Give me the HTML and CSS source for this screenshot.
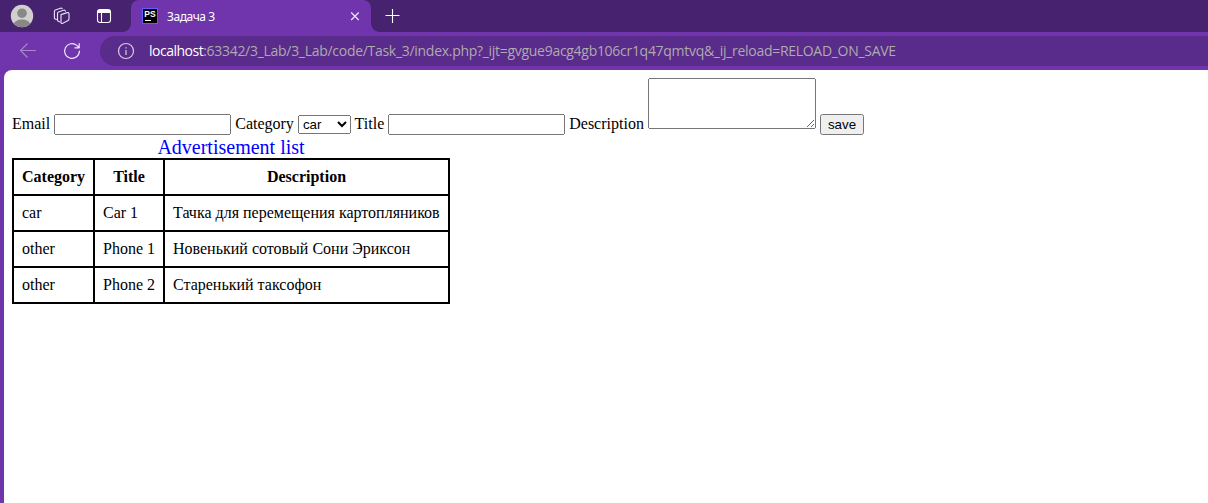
FILE: index.html
```html
<!DOCTYPE html>
<html lang="ru">
<head>
<meta charset="utf-8">
<title>Задача 3</title>
<link rel="stylesheet" href="styles.css">
</head>
<body>
<div class="tabstrip">
  <svg class="avatar" width="24" height="24" viewBox="0 0 24 24"><defs><clipPath id="face"><circle cx="12" cy="12" r="11.2"/></clipPath></defs><circle cx="12" cy="12" r="11.2" fill="#d2d0ce"/><g fill="#8a8886" clip-path="url(#face)"><circle cx="12" cy="9.2" r="4.8"/><ellipse cx="12" cy="20.5" rx="8.2" ry="5"/></g></svg>
  <svg class="workspaces" width="18" height="18" viewBox="0 0 18 18" fill="none" stroke="#e6dff0" stroke-width="1.15" stroke-linejoin="round" stroke-linecap="round"><path d="M8 7.6 14.2 5.6Q16 5.1 16 6.8V12q0 1-.9 1.4L9.8 16.2Q8 17 8 15.200Z"/><path d="M7 15 5.300 14.300Q4.500 14 4.500 13V6.400q0-1 1-1.400l5-1.700q1.500-.5 1.900.8"/><path d="M3.500 12.500 2.200 12Q1.400 11.700 1.400 10.700V4.400q0-1 1-1.400l5-1.700q1.300-.4 1.800.4"/></svg>
  <svg class="tabmenu" width="16" height="16" viewBox="0 0 16 16" fill="none" stroke="#fff" stroke-width="1.1"><rect x="1.500" y="1.500" width="13" height="13" rx="2.500"/><path d="M2 3.500h12" stroke-width="3"/><path d="M5.500 5v9"/></svg>
  <div class="tab">
    <svg width="16" height="16" viewBox="0 0 16 16"><rect x=".5" y=".5" width="15" height="15" fill="#000" stroke="#6b57ff"/><path d="M3 12.500h6" stroke="#fff"/><text class="mark" x="2.300" y="9">PS</text></svg>
    <span class="tab-title">Задача 3</span>
    <svg class="close" width="10" height="10" viewBox="0 0 10 10" stroke="#efe8f7" stroke-width="1.200"><path d="M1.200 1.500l7.500 7.500M8.700 1.500 1.200 9"/></svg>
  </div>
  <svg class="plus" width="16" height="16" viewBox="0 0 16 16" stroke="#fff" stroke-width="1.100"><path d="M1.500 7.500h14M8.500 1v14"/></svg>
</div>
<div class="toolbar">
  <svg class="back" width="18" height="18" viewBox="0 0 18 18" fill="none" stroke="#a888cd" stroke-width="1.100"><path d="M17 8.500H1.500M8.500 1.500l-7 7 7 7"/></svg>
  <svg class="reload" width="18" height="18" viewBox="0 0 18 18" fill="none" stroke="#f0e9f8" stroke-width="1.200" stroke-linecap="round" stroke-linejoin="round"><path d="M16.400 9A7.400 7.400 0 1 1 13.800 3.400L16 5.600M16.200 1.500v4.300h-4.300"/></svg>
  <div class="address">
    <svg class="info" width="18" height="18" viewBox="0 0 18 18" fill="none" stroke="#d8cce6" stroke-width="1.200"><circle cx="9" cy="9" r="7.500"/><path d="M9 8v5M9 5.200v1.400"/></svg>
    <div class="url"><span class="host">localhost</span><span class="path">:63342/3_Lab/3_Lab/code/Task_3/index.php?_ijt=gvgue9acg4gb106cr1q47qmtvq&amp;_ij_reload=RELOAD_ON_SAVE</span></div>
  </div>
</div>
<main class="page">
  <form>
    Email <input class="field" type="text">
    Category <select class="category"><option>car</option><option>other</option></select>
    Title <input class="field" type="text">
    Description <textarea class="description"></textarea>
    <button class="save" type="button">save</button>
  </form>
  <table class="ads">
    <caption>Advertisement list</caption>
    <tr><th class="col-category">Category</th><th class="col-title">Title</th><th class="col-description">Description</th></tr>
    <tr><td>car</td><td>Car 1</td><td>Тачка для перемещения картопляников</td></tr>
    <tr><td>other</td><td>Phone 1</td><td>Новенький сотовый Сони Эриксон</td></tr>
    <tr><td>other</td><td>Phone 2</td><td>Старенький таксофон</td></tr>
  </table>
</main>
</body>
</html>
```
FILE: styles.css
```css
* { box-sizing: border-box; }
body {
  margin: 0;
  height: 503px;
  overflow: hidden;
  display: flex;
  flex-direction: column;
  background: #7034ad;
  font-family: "Liberation Serif", "Times New Roman", serif;
}
svg { flex: none; display: block; }
.tabstrip {
  flex: none;
  display: flex;
  align-items: center;
  height: 32px;
  padding-left: 10px;
  background: #47226f;
}
.workspaces { margin-left: 19px; }
.tabmenu { margin-left: 25px; }
.tab {
  position: relative;
  display: flex;
  align-items: center;
  width: 240px;
  height: 32px;
  margin-left: 19px;
  padding: 0 11px;
  border-radius: 8px 8px 0 0;
  background: #7034ad;
}
.tab::before, .tab::after {
  content: "";
  position: absolute;
  bottom: 0;
  width: 8px;
  height: 8px;
}
.tab::before { left: -8px; background: radial-gradient(circle at 0 0, transparent 7.5px, #7034ad 8px); }
.tab::after { right: -8px; background: radial-gradient(circle at 100% 0, transparent 7.5px, #7034ad 8px); }
.mark { font: bold 8.5px "Liberation Sans", sans-serif; fill: #fff; }
.tab-title {
  margin-left: 9px;
  font: 12px "Noto Sans", sans-serif;
  letter-spacing: -.45px;
  color: #fff;
}
.close { margin-left: auto; }
.plus { margin-left: 13px; }
.toolbar {
  flex: none;
  display: flex;
  align-items: center;
  height: 38px;
  padding-left: 19px;
}
.reload { margin-left: 26px; }
.address {
  flex: 1;
  display: flex;
  align-items: center;
  height: 30px;
  margin-left: 19px;
  padding-left: 17px;
  border-radius: 15px 0 0 15px;
  background: #592b8a;
  font: 14px "Open Sans", sans-serif;
  white-space: nowrap;
}
.url { margin-left: 14px; padding-bottom: 2px; }
.host { color: #fff; letter-spacing: -.5px; }
.path { color: #aeaaae; letter-spacing: -.29px; }
.page {
  flex: 1;
  margin-left: 4px;
  padding: 8px;
  border-top-left-radius: 8px;
  background: #fff;
  font-size: 16px;
  color: #000;
}
form { white-space: nowrap; height: 58px; }
.field, .category, .description, .save {
  font-family: "Liberation Sans", Arial, sans-serif;
  font-size: 13.333px;
}
.field { width: 177px; height: 21px; }
.category { width: 53px; height: 19px; }
.description { width: 168px; height: 51px; }
.save { width: 44px; height: 21px; padding: 1px 6px; }
.ads {
  width: 438px;
  table-layout: fixed;
  border-collapse: collapse;
  white-space: nowrap;
}
.ads caption { font-size: 20px; line-height: 22px; color: #00f; }
.ads th, .ads td { height: 36px; padding: 8px; border: 2px solid #000; line-height: 18px; }
.col-category { width: 81px; }
.col-title { width: 70px; }
```
